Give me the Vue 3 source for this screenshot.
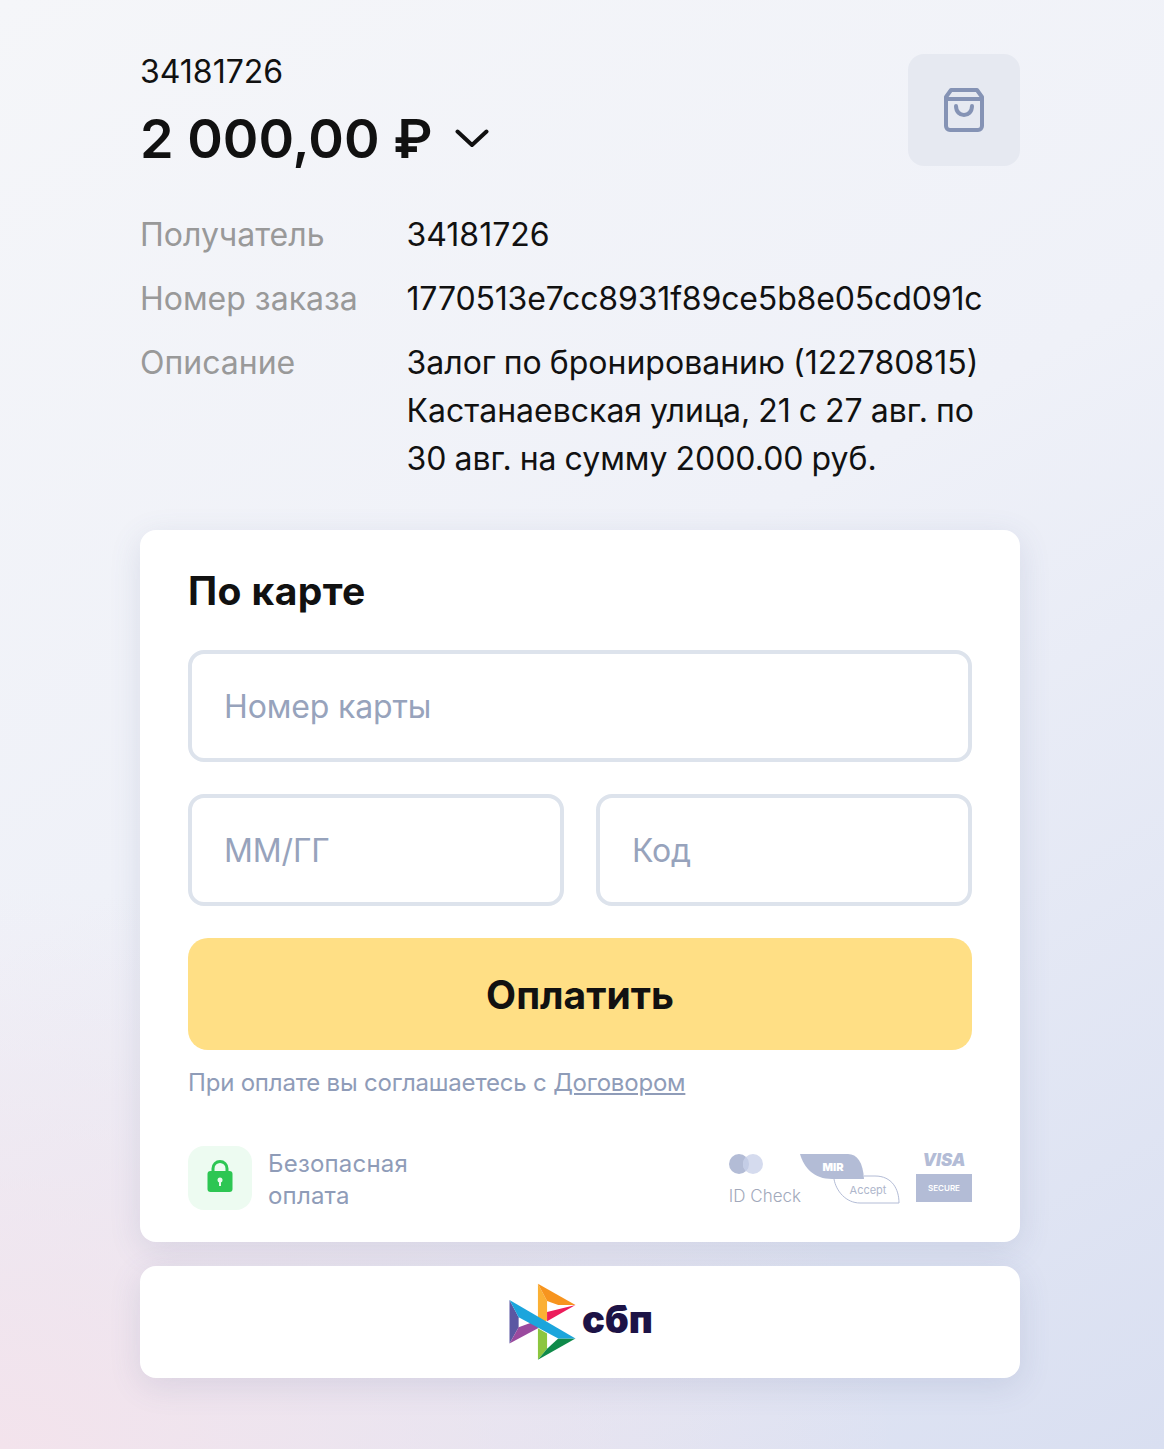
<script setup>
const rows = [
  { label: 'Получатель', lines: ['34181726'] },
  { label: 'Номер заказа', lines: ['1770513e7cc8931f89ce5b8e05cd091c'], tight: true },
  { label: 'Описание', lines: ['Залог по бронированию (122780815)', 'Кастанаевская улица, 21 с 27 авг. по', '30 авг. на сумму 2000.00 руб.'] }
]
</script>

<template>
  <div class="page">
    <main class="wrap">
      <header class="head">
        <div>
          <div class="merchant">34181726</div>
          <div class="amount">
            <span>2 000,00 ₽</span>
            <svg class="chev" width="34" height="22" viewBox="0 0 34 22" fill="none"><path d="M2.500 3.500 17 17 31.500 3.500" stroke="#111" stroke-width="4" stroke-linecap="round" stroke-linejoin="round"/></svg>
          </div>
        </div>
        <div class="bag">
          <svg width="40" height="44" viewBox="0 0 40 44" fill="none" stroke="#8593b5" stroke-width="4" stroke-linejoin="round" stroke-linecap="round">
            <path d="M7 2h26l5 7v29a4 4 0 0 1-4 4H6a4 4 0 0 1-4-4V9z"/>
            <path d="M2 11h36"/>
            <path d="M12 18c0 12 16 12 16 0"/>
          </svg>
        </div>
      </header>

      <section class="details">
        <div v-for="r in rows" :key="r.label" class="row">
          <div class="label">{{ r.label }}</div>
          <div class="value" :class="{ tight: r.tight }"><div v-for="l in r.lines" :key="l">{{ l }}</div></div>
        </div>
      </section>

      <section class="card">
        <h2 class="title">По карте</h2>
        <div class="field">Номер карты</div>
        <div class="pair">
          <div class="field">ММ/ГГ</div>
          <div class="field">Код</div>
        </div>
        <button class="pay">Оплатить</button>
        <p class="legal">При оплате вы соглашаетесь с <a class="link">Договором</a></p>
        <div class="foot">
          <div class="safe">
            <div class="lock">
              <svg width="26" height="32" viewBox="0 0 26 32">
                <path d="M6 14V8.500a7 7 0 0 1 14 0V14" fill="none" stroke="#2dc653" stroke-width="3"/>
                <rect x="0.500" y="11" width="25" height="21" rx="3" fill="#2dc653"/>
                <circle cx="13" cy="20" r="2.500" fill="#eafaee"/>
                <rect x="12" y="20" width="2" height="6" fill="#eafaee"/>
              </svg>
            </div>
            <div class="safe-text">Безопасная<br>оплата</div>
          </div>
          <div class="brands">
            <div class="idcheck">
              <svg width="34" height="20" viewBox="0 0 34 20">
                <circle cx="10" cy="10" r="10" fill="#b3bcd6"/>
                <circle cx="24" cy="10" r="10" fill="#d5dbee"/>
                <path d="M17 2.800a10 10 0 0 1 0 14.400a10 10 0 0 1 0-14.400z" fill="#c4cde6"/>
              </svg>
              <span>ID Check</span>
            </div>
            <svg class="mir" width="102" height="50" viewBox="0 0 102 50">
              <path d="M2 0h48c9 0 15 8 16 25H34C16 25 6 14 2 0z" fill="#b3bcd6"/>
              <text x="35" y="17" text-anchor="middle" font-family="Inter, sans-serif" font-size="11" font-weight="900" fill="#fff">MIR</text>
              <path d="M36 25c2 12 12 24 26 24h39c0-14-7-27-24-27H66" fill="none" stroke="#b3bcd6"/>
              <text x="70" y="40" text-anchor="middle" font-family="Inter, sans-serif" font-size="11" fill="#aeb6cb">Accept</text>
            </svg>
            <div class="visa">
              <span class="visa-word">VISA</span>
              <span class="secure">SECURE</span>
            </div>
          </div>
        </div>
      </section>

      <section class="sbp">
        <svg class="sbp-logo" width="67" height="78" viewBox="19.500 13.500 66 76.500">
          <polygon points="20,30 29,47 29,57 20,73" fill="#5b57a2"/>
          <polygon points="20,73 29,57 48,50 48,58" fill="#9a4a9e"/>
          <polygon points="48,14 57,31 57,50 48,56" fill="#fbb034"/>
          <polygon points="48,14 85,35 68,35 57,31" fill="#f7941e"/>
          <polygon points="85,35 57,42 57,51" fill="#ec1c5b"/>
          <polygon points="48,58 57,63 57,78 48,89" fill="#8cc63f"/>
          <polygon points="48,89 85,68 68,68 57,78" fill="#0f8a4a"/>
          <polygon points="20,30 85,68 68,68 29,47" fill="#1ba5dc"/>
        </svg>
        <span class="sbp-word">сбп</span>
      </section>
    </main>
  </div>
</template>

<style scoped>
.page {
  min-height: 1449px;
  box-sizing: border-box;
  padding: 49px 144px 71px 140px;
  font-family: Inter, "Liberation Sans", sans-serif;
  color: #111;
  background:
    radial-gradient(900px 560px at 0% 100%, #f3e3ec 0%, rgba(243, 227, 236, 0) 100%),
    linear-gradient(150deg, #f5f6f9 0%, #eff1f8 45%, #d9dff1 100%);
}
.head { display: flex; justify-content: space-between; align-items: flex-start; }
.merchant { font-size: 32px; line-height: 46px; }
.amount { display: flex; align-items: center; gap: 22px; margin-top: 12px; font-size: 54px; font-weight: 600; line-height: 64px; }
.bag {
  width: 112px; height: 112px; margin-top: 5px; border-radius: 16px; background: #e6e9f1;
  display: flex; align-items: center; justify-content: center;
}
.details { margin-top: 40px; display: flex; flex-direction: column; gap: 16px; }
.row { display: flex; font-size: 32px; line-height: 48px; }
.label { width: 266.500px; flex: none; color: #999; }
.value { word-spacing: -1px; }
.tight { letter-spacing: -0.150px; }
.card {
  margin-top: 47px; padding: 32px 48px; background: #fff; border-radius: 16px;
  box-shadow: 0 8px 32px rgba(80, 90, 140, 0.14);
  display: flex; flex-direction: column;
}
.title { margin: 0 0 30px; font-size: 39px; line-height: 58px; font-weight: 700; letter-spacing: 0.4px; }
.field {
  box-sizing: border-box; height: 112px; border: 4px solid #dde3ec; border-radius: 16px;
  padding: 1px 32px 0; display: flex; align-items: center; font-size: 32px; color: #97a3bc; letter-spacing: -0.150px;
}
.pair { display: grid; grid-template-columns: 1fr 1fr; gap: 32px; margin-top: 32px; }
.pay {
  margin-top: 32px; height: 112px; border: 0; border-radius: 20px; background: #ffdf85;
  font-family: inherit; font-size: 39px; font-weight: 700; color: #111;
}
.legal { margin: 17px 0 0; font-size: 24px; line-height: 32px; color: #8f9cb8; letter-spacing: -0.2px; }
.link { text-decoration: underline; }
.foot { margin-top: 47px; display: flex; justify-content: space-between; align-items: flex-start; }
.safe { display: flex; align-items: center; gap: 16px; }
.lock { box-sizing: border-box; width: 64px; height: 64px; padding-bottom: 4px; border-radius: 16px; background: #edfbf1; display: flex; align-items: center; justify-content: center; }
.safe-text { margin-bottom: -2px; padding-top: 2px; font-size: 24px; line-height: 32px; color: #8f9cb8; letter-spacing: 0.2px; }
.brands { display: flex; align-items: flex-start; }
.idcheck { display: flex; flex-direction: column; align-items: flex-start; gap: 12px; padding-top: 8px; font-size: 17px; font-weight: 300; color: #a2a9bb; }
.mir { margin-left: -3px; margin-top: 8px; }
.visa { margin-left: 16px; width: 56px; display: flex; flex-direction: column; align-items: center; }
.visa-word { font-size: 17px; line-height: 28px; font-weight: 900; font-style: italic; color: #b3bcd6; }
.secure { width: 100%; height: 28px; background: #b3bcd6; color: #fff; font-size: 8px; font-weight: 600; display: flex; align-items: center; justify-content: center; }
.sbp {
  margin-top: 24px; height: 112px; background: #fff; border-radius: 16px;
  box-shadow: 0 8px 32px rgba(80, 90, 140, 0.14);
  display: flex; align-items: center; justify-content: center; gap: 6px;
}
.sbp-logo { margin-left: 2px; }
.sbp-word { margin-bottom: 6px; font-size: 38px; font-weight: 900; color: #1d1346; line-height: 1; }
</style>
